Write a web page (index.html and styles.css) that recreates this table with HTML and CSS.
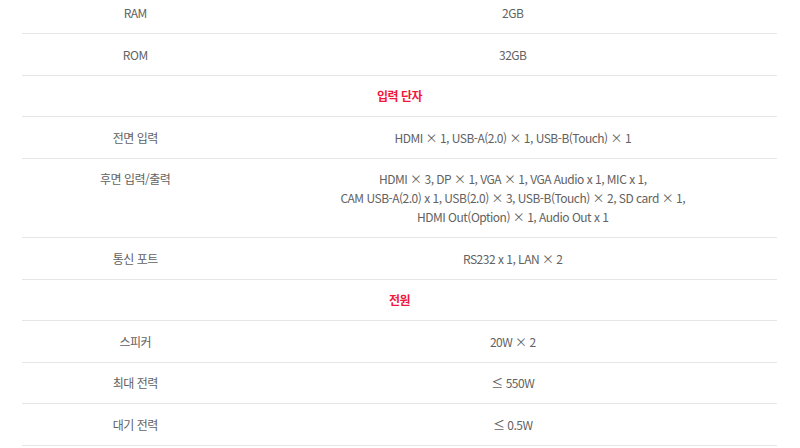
FILE: index.html
```html
<!DOCTYPE html>
<html lang="ko">
<head>
<meta charset="utf-8">
<link rel="stylesheet" href="styles.css">
</head>
<body>
<div class="wrap">
<table class="spec">
  <colgroup><col class="c1"><col class="c2"></colgroup>
  <tbody>
    <tr><th>RAM</th><td>2GB</td></tr>
    <tr><th>ROM</th><td>32GB</td></tr>
    <tr class="sect"><th colspan="2">입력 단자</th></tr>
    <tr><th>전면 입력</th><td>HDMI × 1, USB-A(2.0) × 1, USB-B(Touch) × 1</td></tr>
    <tr><th>후면 입력/출력</th><td>HDMI × 3, DP × 1, VGA × 1, VGA Audio x 1, MIC x 1,<br>CAM USB-A(2.0) x 1, USB(2.0) × 3, USB-B(Touch) × 2, SD card × 1,<br>HDMI Out(Option) × 1, Audio Out x 1</td></tr>
    <tr><th>통신 포트</th><td>RS232 x 1, LAN × 2</td></tr>
    <tr class="sect"><th colspan="2">전원</th></tr>
    <tr><th>스피커</th><td>20W × 2</td></tr>
    <tr><th>최대 전력</th><td>≤ 550W</td></tr>
    <tr><th>대기 전력</th><td>≤ 0.5W</td></tr>
  </tbody>
</table>
</div>
</body>
</html>
```
FILE: styles.css
```css
html, body {
  margin: 0;
  padding: 0;
  background: #fff;
  overflow: hidden;
}
.wrap {
  padding: 0 23px 0 22px;
  margin-top: -7.5px;
}
.spec {
  width: 100%;
  border-collapse: collapse;
  table-layout: fixed;
  font-family: "Noto Sans CJK KR", "Noto Sans", sans-serif;
  font-size: 12px;
  letter-spacing: -0.5px;
  line-height: 18.8px;
  color: #626262;
}
.c1 { width: 30%; }
.spec th, .spec td {
  font-weight: normal;
  text-align: center;
  vertical-align: top;
  padding: 11.6px 0 10.2px;
  border-bottom: 1px solid #e6e6e6;
}
.spec .sect th {
  color: #f0193c;
  font-weight: bold;
}
```
